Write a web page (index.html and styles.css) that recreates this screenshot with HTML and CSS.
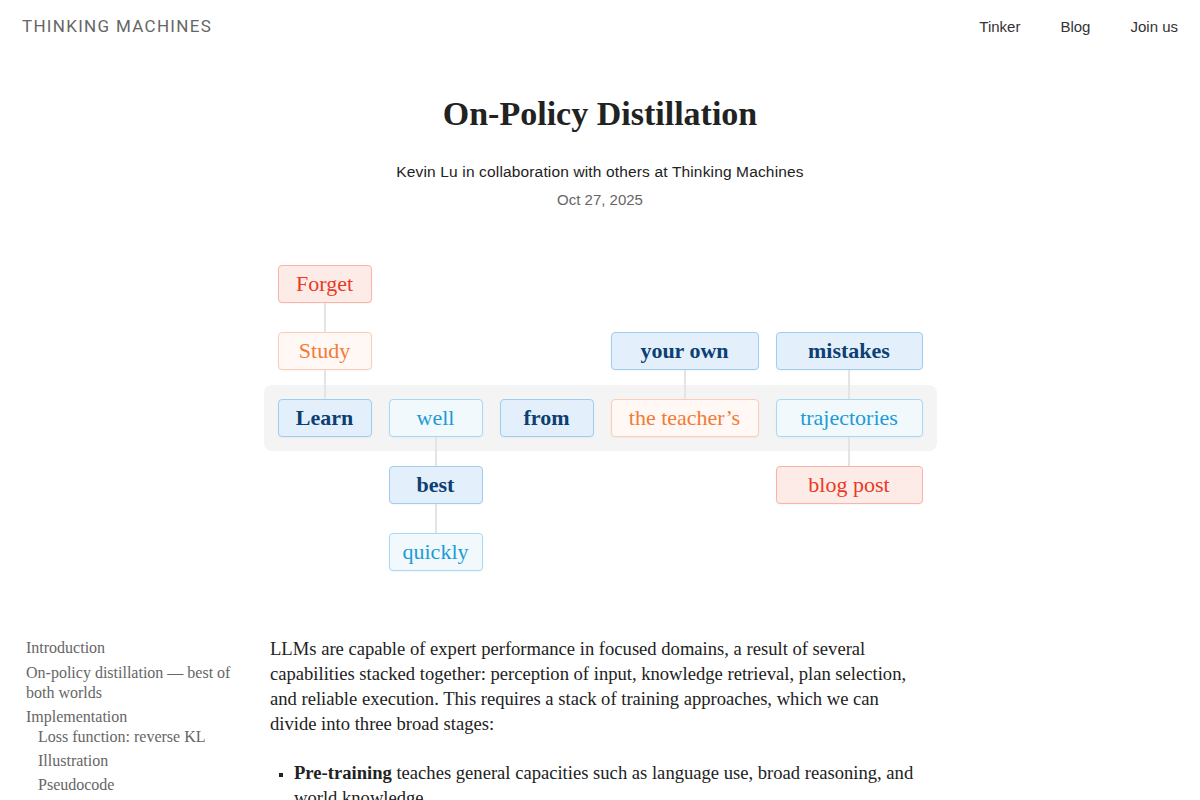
FILE: index.html
```html
<!DOCTYPE html>
<html lang="en">
<head>
<meta charset="utf-8">
<title>On-Policy Distillation</title>
<link rel="stylesheet" href="styles.css">
</head>
<body>
<header class="site-header">
  <a class="logo" href="#">THINKING MACHINES</a>
  <nav class="nav">
    <a href="#">Tinker</a>
    <a href="#">Blog</a>
    <a href="#">Join us</a>
  </nav>
</header>

<section class="hero">
  <h1 class="title">On-Policy Distillation</h1>
  <p class="byline">Kevin Lu in collaboration with others at Thinking Machines</p>
  <p class="date">Oct 27, 2025</p>
</section>

<figure class="diagram">
  <div class="band"></div>
  <div class="box red c1 r1">Forget</div>
  <div class="box orange c1 r2 link">Study</div>
  <div class="box navy c1 r3 link">Learn</div>
  <div class="box sky c2 r3">well</div>
  <div class="box navy c2 r4 link">best</div>
  <div class="box sky c2 r5 link">quickly</div>
  <div class="box navy c3 r3">from</div>
  <div class="box navy c4 r2">your own</div>
  <div class="box orange c4 r3 link">the teacher’s</div>
  <div class="box navy c5 r2">mistakes</div>
  <div class="box sky c5 r3 link">trajectories</div>
  <div class="box red c5 r4 link">blog post</div>
</figure>

<main class="content">
  <aside class="toc">
    <ul class="toc-list">
      <li><a href="#">Introduction</a></li>
      <li><a href="#">On-policy distillation — best of both worlds</a></li>
      <li><a href="#">Implementation</a>
        <ul class="toc-sub">
          <li><a href="#">Loss function: reverse KL</a></li>
          <li><a href="#">Illustration</a></li>
          <li><a href="#">Pseudocode</a></li>
        </ul>
      </li>
    </ul>
  </aside>
  <article class="article">
    <p>LLMs are capable of expert performance in focused domains, a result of several capabilities stacked together: perception of input, knowledge retrieval, plan selection, and reliable execution. This requires a stack of training approaches, which we can divide into three broad stages:</p>
    <ul class="stages">
      <li><strong>Pre-training</strong> teaches general capacities such as language use, broad reasoning, and world knowledge.</li>
    </ul>
  </article>
</main>
</body>
</html>
```

FILE: styles.css
```css
* { box-sizing: border-box; }
html, body { margin: 0; padding: 0; }
body {
  background: #fff;
  color: #222;
  font-family: "Liberation Serif", "Times New Roman", serif;
}
a { color: inherit; text-decoration: none; }

.site-header {
  display: flex;
  justify-content: space-between;
  align-items: center;
  height: 52px;
  padding: 0 22px 0 22px;
}
.logo {
  font-family: "Roboto", "DejaVu Sans", sans-serif;
  font-size: 17px;
  letter-spacing: 1.3px;
  color: #666;
}
.nav {
  display: flex;
  gap: 40px;
  font-family: "Liberation Sans", Arial, sans-serif;
  font-size: 15px;
  color: #333;
}

.hero { text-align: center; }
.title {
  margin: 42px 0 0;
  font-size: 34px;
  line-height: 40px;
  font-weight: bold;
  color: #222;
}
.byline {
  margin: 28px 0 0;
  font-family: "Liberation Sans", Arial, sans-serif;
  font-size: 15.5px;
  letter-spacing: 0.15px;
  line-height: 20px;
  color: #222;
}
.date {
  margin: 8px 0 0;
  font-family: "Liberation Sans", Arial, sans-serif;
  font-size: 15px;
  line-height: 20px;
  color: #666;
}

.diagram {
  margin: 55px auto 0;
  width: 645px;
  display: grid;
  grid-template-columns: 94px 94px 94px 148px 147px;
  grid-template-rows: repeat(5, 38px);
  column-gap: 17px;
  row-gap: 29px;
  position: relative;
}
.band {
  grid-column: 1 / -1;
  grid-row: 3;
  margin: -14px;
  background: #f4f4f4;
  border-radius: 8px;
}
.box {
  position: relative;
  display: flex;
  align-items: center;
  justify-content: center;
  border: 1px solid;
  border-radius: 4px;
  font-size: 22px;
  white-space: nowrap;
  box-shadow: 0 1px 2px rgba(0,0,0,0.04);
}
.box.link::before {
  content: "";
  position: absolute;
  left: 50%;
  top: -30px;
  height: 29px;
  width: 2px;
  margin-left: -1px;
  background: #e4e4e4;
}
.c1 { grid-column: 1; }
.c2 { grid-column: 2; }
.c3 { grid-column: 3; }
.c4 { grid-column: 4; }
.c5 { grid-column: 5; }
.r1 { grid-row: 1; }
.r2 { grid-row: 2; }
.r3 { grid-row: 3; }
.r4 { grid-row: 4; }
.r5 { grid-row: 5; }

.red { background: #fdebe8; border-color: #f8b4a4; color: #ea3a1f; }
.orange { background: #fff8f4; border-color: #fccdb4; color: #f47a35; }
.navy { background: #e3f0fb; border-color: #9fcdf2; color: #0d3f72; font-weight: bold; }
.sky { background: #f1f9fd; border-color: #a6d9f2; color: #1b9bd8; }

.content {
  display: flex;
  margin-top: 65px;
  padding-left: 26px;
}
.toc {
  width: 244px;
  flex: none;
  padding-right: 30px;
  padding-top: 2px;
}
.toc-list, .toc-sub {
  list-style: none;
  margin: 0;
  padding: 0;
}
.toc-list > li {
  font-size: 16px;
  line-height: 20px;
  color: #666;
  margin-bottom: 4.5px;
}
.toc-sub { padding-left: 12px; }
.toc-sub li { margin-bottom: 4px; }

.article {
  width: 655px;
  font-size: 18.6px;
  line-height: 25px;
  color: #222;
}
.article p { margin: 0 0 24px; }
.stages {
  margin: 0;
  padding-left: 24px;
  list-style: square;
}
.stages li::marker { color: #222; font-size: 14px; }
.stages strong { color: #222; }
```
